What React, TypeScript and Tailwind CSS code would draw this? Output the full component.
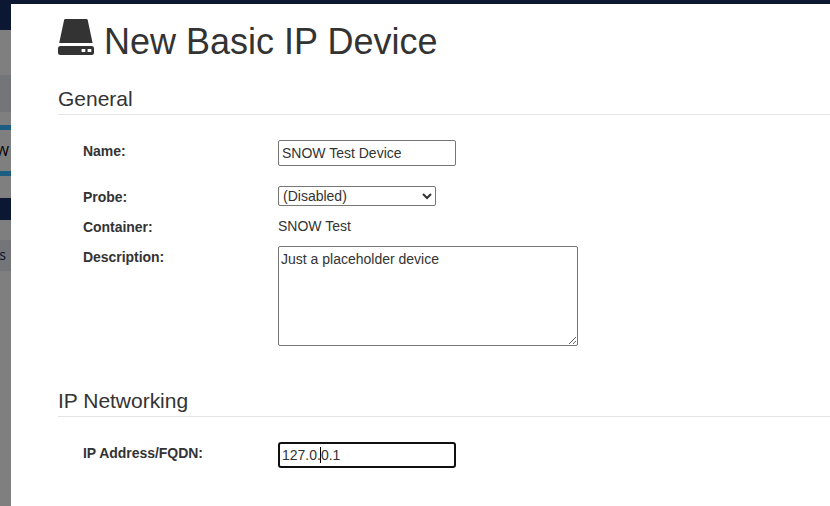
import type { ReactNode } from "react";

function PageEdge() {
  return (
    <div className="flex w-[11px] shrink-0 flex-col overflow-hidden bg-[#7f7f7f] font-['Noto_Sans',sans-serif] text-black">
      <div className="h-[26px] shrink-0 bg-[#0c1731]" />
      <div className="h-[45px] shrink-0" />
      <div className="h-[37px] shrink-0 bg-[#737578]" />
      <div className="h-[13px] shrink-0" />
      <div className="flex h-[51px] shrink-0 items-center justify-end border-y-[5px] border-[#1b5e82] pr-[2px] text-[14px]">
        W
      </div>
      <div className="h-[22px] shrink-0" />
      <div className="h-[22px] shrink-0 bg-[#0c1731]" />
      <div className="h-5 shrink-0" />
      <div className="flex h-[31px] shrink-0 items-center justify-end bg-[#737578] pr-[5px] pb-[2px] text-[14px] text-[#0c1731]">
        s
      </div>
    </div>
  );
}

function DriveIcon() {
  return (
    <svg width="36" height="36" viewBox="0 0 36 36" className="shrink-0" fill="#333">
      <path d="M7.3 0h21.2q1 0 1.2 1L34.6 24H1.2L6.1 1Q6.3 0 7.3 0Z" />
      <path
        fillRule="evenodd"
        d="M2.5 27h31q2.5 0 2.5 2.5v4q0 2.5-2.5 2.5h-31Q0 36 0 33.5v-4Q0 27 2.5 27ZM23.6 30v3h3.7v-3ZM29.6 30v3h3.7v-3Z"
      />
    </svg>
  );
}

function Row({ label, className, children }: { label: string; className: string; children: ReactNode }) {
  return (
    <div className={`flex items-start pl-[25px] ${className}`}>
      <div className="w-[195px] shrink-0 font-bold tracking-[-0.04px]">{label}</div>
      {children}
    </div>
  );
}

function Legend({ children }: { children: ReactNode }) {
  return <h2 className="h-[31px] border-b border-[#e5e5e5] text-[21px] leading-[30px] tracking-[-0.02px]">{children}</h2>;
}

export default function App() {
  return (
    <div className="flex h-[506px] w-[830px] flex-col overflow-hidden bg-white font-['Liberation_Sans',Arial,sans-serif] text-[14px] leading-5 text-[#333]">
      <div className="h-1 shrink-0 bg-[#0c1731]" />
      <div className="flex min-h-0 flex-1">
        <PageEdge />
        <main className="min-w-0 flex-1 pl-[47px] pt-[15px]">
          <h1 className="flex h-[65px] items-start gap-[10px] text-[36px] leading-[46px]">
            <DriveIcon />
            <span className="whitespace-nowrap">New Basic IP Device</span>
          </h1>
          <Legend>General</Legend>
          <Row label="Name:" className="h-[45px] mt-[26px]">
            <input
              defaultValue="SNOW Test Device"
              className="-mt-px h-[26px] w-[178px] rounded-[2px] border border-[#767676] px-[3px] outline-none"
            />
          </Row>
          <Row label="Probe:" className="h-[30px] mt-[1px]">
            <select className="-mt-px h-5 w-[158px] rounded-[2px] border border-[#767676] bg-white text-[14px] leading-[18px] outline-none">
              <option>(Disabled)</option>
            </select>
          </Row>
          <Row label="Container:" className="h-[30px]">
            <span className="-mt-px">SNOW Test</span>
          </Row>
          <Row label="Description:" className="h-[100px]">
            <textarea
              defaultValue="Just a placeholder device"
              className="-mt-px h-[100px] w-[300px] resize rounded-[2px] border border-[#767676] p-[2px] outline-none"
            />
          </Row>
          <div className="mt-[39px]">
            <Legend>IP Networking</Legend>
          </div>
          <Row label="IP Address/FQDN:" className="mt-[26px]">
            <div className="-mt-px flex h-[26px] w-[178px] items-center rounded-[3px] border-2 border-[#101010] pl-[2px]">
              <span>127.0.</span>
              <span className="-ml-px h-4 w-px bg-black" />
              <span>0.1</span>
            </div>
          </Row>
        </main>
      </div>
    </div>
  );
}
